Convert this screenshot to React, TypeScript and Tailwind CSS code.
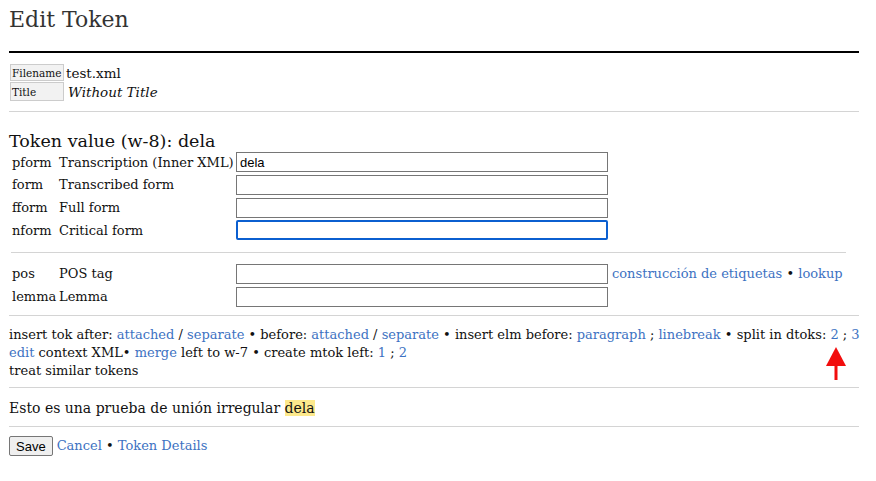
const link = 'text-[#3d72c2]';

function Field({ code, label, value, focused }: { code: string; label: string; value?: string; focused?: boolean }) {
  return (
    <div className="flex h-[22.7px] items-center whitespace-nowrap">
      <span className="w-[50px] pl-[3px]">{code}</span>
      <span className="w-[175px]">{label}</span>
      <input
        readOnly
        value={value ?? ''}
        className={`ml-[2px] h-[20px] w-[372px] bg-white px-[3px] font-['Liberation_Sans',sans-serif] text-[13px] text-black outline-none ${
          focused ? 'border-2 border-[#0b5fd0] rounded-[2px]' : 'border border-[#767676]'
        }`}
      />
    </div>
  );
}

export default function App() {
  return (
    <div className="relative min-h-[481px] w-[876px] bg-white px-[9px] font-['DejaVu_Serif',serif] text-[13px] text-[#111]">
      <h1 className="pt-[6px] text-[22px] leading-[28px] text-[#333]">Edit Token</h1>
      <div className="mt-[17px] h-[2px] w-[850px] bg-black" />

      <table className="mt-[10px] border-separate border-spacing-[1px]">
        <tbody>
          <tr>
            <td className="h-[17px] w-[54px] border border-[#ccc] bg-[#f2f2f2] px-[1px] text-[10.5px] leading-[14px]">Filename</td>
            <td className="pl-[1px] text-[13.5px] leading-[16px]">test.xml</td>
          </tr>
          <tr>
            <td className="h-[19px] border border-[#ccc] bg-[#f2f2f2] px-[1px] text-[10.5px] leading-[14px]">Title</td>
            <td className="pl-[3px] text-[13.5px] italic leading-[16px]">Without Title</td>
          </tr>
        </tbody>
      </table>

      <div className="mt-[9px] h-px w-[850px] bg-[#d4d4d4]" />

      <h2 className="mt-[18px] text-[17.5px] leading-[22px]">Token value (w-8): dela</h2>
      <div className="mt-[-1px]">
        <Field code="pform" label="Transcription (Inner XML)" value="dela" />
        <Field code="form" label="Transcribed form" />
        <Field code="fform" label="Full form" />
        <Field code="nform" label="Critical form" focused />
      </div>

      <div className="ml-[2px] mt-[10px] h-px w-[835px] bg-[#d4d4d4]" />

      <div className="mt-[10px] whitespace-nowrap">
        <div className="flex h-[22.7px] items-center">
          <span className="w-[50px] pl-[3px]">pos</span>
          <span className="w-[175px]">POS tag</span>
          <input readOnly className="ml-[2px] h-[20px] w-[372px] border border-[#767676] bg-white outline-none" />
          <span className="ml-[4px]">
            <span className={link}>construcción de etiquetas</span> • <span className={link}>lookup</span>
          </span>
        </div>
        <div className="flex h-[22.7px] items-center">
          <span className="w-[50px] pl-[3px]">lemma</span>
          <span className="w-[175px]">Lemma</span>
          <input readOnly className="ml-[2px] h-[20px] w-[372px] border border-[#767676] bg-white outline-none" />
        </div>
      </div>

      <div className="mt-[7px] h-px w-[850px] bg-[#d4d4d4]" />

      <div className="mt-[10px] whitespace-nowrap leading-[18px]">
        <div>
          insert tok after: <span className={link}>attached</span> / <span className={link}>separate</span> • before:{' '}
          <span className={link}>attached</span> / <span className={link}>separate</span> • insert elm before:{' '}
          <span className={link}>paragraph</span> ; <span className={link}>linebreak</span> • split in dtoks:{' '}
          <span className={link}>2</span> ; <span className={link}>3</span>
        </div>
        <div>
          <span className={link}>edit</span> context XML• <span className={link}>merge</span> left to w-7 • create mtok left:{' '}
          <span className={link}>1</span> ; <span className={link}>2</span>
        </div>
        <div>treat similar tokens</div>
      </div>

      <div className="mt-[7px] h-px w-[850px] bg-[#d4d4d4]" />

      <p className="mt-[10px] text-[14px] leading-[20px]">
        Esto es una prueba de unión irregular <span className="bg-[#fde98c]">dela</span>
      </p>

      <div className="mt-[8px] h-px w-[850px] bg-[#d4d4d4]" />

      <div className="mt-[9px] flex items-center gap-[4px]">
        <button className="h-[20px] rounded-[2px] border border-[#767676] bg-[#efefef] px-[6px] font-['Liberation_Sans',sans-serif] text-[13px] text-black">
          Save
        </button>
        <span>
          <span className={link}>Cancel</span> • <span className={link}>Token Details</span>
        </span>
      </div>

      <svg className="absolute left-[826px] top-[347px]" width="20" height="33" viewBox="0 0 20 33">
        <polygon points="10,0 20,19 0,19" fill="#f20d0d" />
        <rect x="8.5" y="18" width="3" height="15" fill="#f20d0d" />
      </svg>
    </div>
  );
}
